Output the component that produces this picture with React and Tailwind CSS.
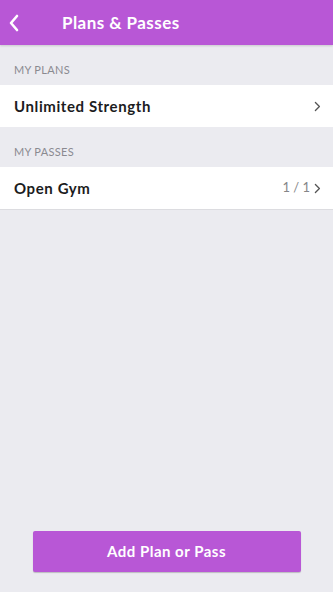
import React from "react";

const Chevron = ({ className }) => (
  <svg viewBox="0 0 10 16" className={className} fill="none" stroke="currentColor" strokeWidth="1.6" strokeLinecap="round" strokeLinejoin="round">
    <path d="M3 3l5 5-5 5" />
  </svg>
);

export default function App() {
  return (
    <div className="w-[333px] h-[592px] bg-[#ebebf0] flex flex-col" style={{ fontFamily: "Lato, 'Open Sans', sans-serif" }}>
      <div className="h-[45px] bg-[#b857d6] flex items-center shadow-[0_1px_2px_rgba(0,0,0,0.15)]">
        <svg viewBox="0 0 12 18" className="w-[12px] h-[18px] ml-[8px] text-white" fill="none" stroke="currentColor" strokeWidth="2.6" strokeLinecap="round" strokeLinejoin="round">
          <path d="M9 2L3 9l6 7" />
        </svg>
        <div className="ml-[42px] text-white text-[17px] font-bold tracking-[0.45px]">Plans &amp; Passes</div>
      </div>
      <div className="h-[40px] flex items-end pb-[7px] px-[14px] text-[11px] text-[#8a8a90] tracking-[0.3px]">MY PLANS</div>
      <div className="h-[42px] bg-white flex items-center justify-between px-[14px]">
        <span className="text-[15px] font-bold text-[#1c1c1e] tracking-[0.6px]">Unlimited Strength</span>
        <Chevron className="w-[8px] h-[13px] text-[#555] mr-[-2px]" />
      </div>
      <div className="h-[40px] flex items-end pb-[7px] px-[14px] text-[11px] text-[#8a8a90] tracking-[0.3px]">MY PASSES</div>
      <div className="h-[43px] bg-white flex items-center justify-between px-[14px] border-b border-[#dcdce0]">
        <span className="text-[15px] font-bold text-[#1c1c1e] tracking-[0.6px]">Open Gym</span>
        <div className="flex items-center gap-[3px] mr-[-2px]">
          <span className="text-[13px] text-[#858588]">1 / 1</span>
          <Chevron className="w-[8px] h-[13px] text-[#555]" />
        </div>
      </div>
      <div className="flex-1" />
      <div className="flex justify-center pb-[20px]">
        <button className="w-[268px] h-[41px] bg-[#b857d6] rounded-[2px] text-white text-[15px] font-bold tracking-[0.5px] shadow-[0_1px_1px_rgba(0,0,0,0.2)]">Add Plan or Pass</button>
      </div>
    </div>
  );
}
